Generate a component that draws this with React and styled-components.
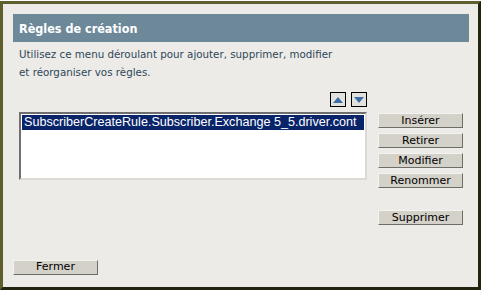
import React, { useState } from "react";
import styled, { createGlobalStyle } from "styled-components";

// Fenêtre "Règles de création" – liste de règles avec boutons d'action
const rules = ["SubscriberCreateRule.Subscriber.Exchange 5_5.driver.cont"];

const GlobalStyle = createGlobalStyle`
  html, body {
    margin: 0;
    padding: 0;
    background: #ffffff;
  }
  body {
    padding-top: 1px;
    font-family: "DejaVu Sans", Verdana, sans-serif;
  }
`;

const Frame = styled.div`
  width: 481px;
  height: 289px;
  box-sizing: border-box;
  border: 3px solid;
  border-color: #5e5f2c #22240f #22240f #5e5f2c;
  background: #ecebe7;
  padding: 10px 9px 0 10px;
  display: flex;
  flex-direction: column;
`;

const TitleBar = styled.div`
  height: 28px;
  background: #6c8899;
  color: #ffffff;
  font-family: "DejaVu Sans Condensed", "DejaVu Sans", sans-serif;
  font-weight: bold;
  font-size: 12.5px;
  display: flex;
  align-items: center;
  padding-left: 6px;
`;

const Description = styled.p`
  margin: 3px 0 0;
  padding-left: 6px;
  font-size: 10.3px;
  line-height: 18px;
  color: #2c4659;
`;

const Body = styled.div`
  display: grid;
  grid-template-columns: 348px 85px;
  column-gap: 11px;
  margin: 11px 0 0 6px;
`;

const ArrowRow = styled.div`
  grid-column: 1;
  display: flex;
  justify-content: flex-end;
  gap: 5px;
  margin-bottom: 5px;
`;

const ArrowButton = styled.button`
  width: 16px;
  height: 15px;
  padding: 0;
  box-sizing: border-box;
  border: 1px solid #000;
  background: #e4e2dc;
  display: flex;
  align-items: center;
  justify-content: center;
`;

const ListBox = styled.div`
  grid-column: 1;
  height: 68px;
  box-sizing: border-box;
  background: #ffffff;
  border: 2px solid;
  border-color: #6f6f6f #dcdad4 #dcdad4 #6f6f6f;
  padding: 1px;
  overflow: hidden;
`;

const ListItem = styled.div`
  height: 15px;
  line-height: 15px;
  white-space: nowrap;
  font-family: "Liberation Sans", Arial, sans-serif;
  font-size: 12.6px;
  padding-left: 2px;
  color: ${(p) => (p.$selected ? "#ffffff" : "#000000")};
  background: ${(p) => (p.$selected ? "#0a246a" : "transparent")};
  cursor: default;
`;

const ButtonColumn = styled.div`
  grid-column: 2;
  display: flex;
  flex-direction: column;
  gap: 5px;
  margin-top: 1px;
`;

const Button = styled.button`
  width: 85px;
  height: 15px;
  padding: 0;
  box-sizing: border-box;
  background: #d4d1c9;
  border: 1px solid;
  border-color: #f4f3ef #6d6d6a #6d6d6a #f4f3ef;
  font-family: "DejaVu Sans", Tahoma, sans-serif;
  font-size: 11px;
  line-height: 12px;
  color: #000;
  margin-top: ${(p) => p.$gap || 0}px;
`;

const Footer = styled.div`
  margin-top: 30px;
`;

const Triangle = ({ down }) => (
  <svg width="10" height="6" viewBox="0 0 10 6">
    <polygon
      points={down ? "0,0 10,0 5,6" : "0,6 10,6 5,0"}
      fill="#3b6ea8"
    />
  </svg>
);

const App = () => {
  const [selected, setSelected] = useState(0);

  return (
    <>
      <GlobalStyle />
      <Frame>
        <TitleBar>Règles de création</TitleBar>
        <Description>
          Utilisez ce menu déroulant pour ajouter, supprimer, modifier
          <br />
          et réorganiser vos règles.
        </Description>

        <Body>
          <ArrowRow>
            <ArrowButton title="Monter">
              <Triangle />
            </ArrowButton>
            <ArrowButton title="Descendre">
              <Triangle down />
            </ArrowButton>
          </ArrowRow>

          <ListBox>
            {rules.map((r, i) => (
              <ListItem
                key={r}
                $selected={selected === i}
                onClick={() => setSelected(i)}
              >
                {r}
              </ListItem>
            ))}
          </ListBox>

          <ButtonColumn>
            <Button>Insérer</Button>
            <Button>Retirer</Button>
            <Button>Modifier</Button>
            <Button>Renommer</Button>
            <Button $gap={17}>Supprimer</Button>
          </ButtonColumn>
        </Body>

        <Footer>
          <Button>Fermer</Button>
        </Footer>
      </Frame>
    </>
  );
};

export default App;
